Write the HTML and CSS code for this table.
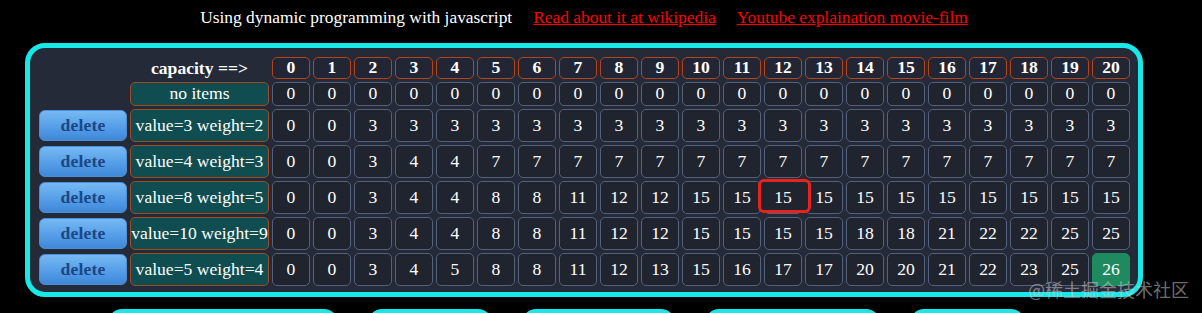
FILE: index.html
```html
<!DOCTYPE html>
<html lang="en">
<head>
<meta charset="utf-8">
<title>Knapsack - dynamic programming</title>
<link rel="stylesheet" href="styles.css">
</head>
<body>
<div class="page">
  <header class="top">
    <span>Using dynamic programming with javascript</span>
    <a href="#">Read about it at wikipedia</a>
    <a href="#">Youtube explaination movie-film</a>
  </header>

  <section class="card">
    <div class="grid">
      <div class="blank"></div>
      <div class="cap">capacity ==&gt;</div>
      <div class="n h">0</div><div class="n h">1</div><div class="n h">2</div><div class="n h">3</div><div class="n h">4</div><div class="n h">5</div><div class="n h">6</div><div class="n h">7</div><div class="n h">8</div><div class="n h">9</div><div class="n h">10</div><div class="n h">11</div><div class="n h">12</div><div class="n h">13</div><div class="n h">14</div><div class="n h">15</div><div class="n h">16</div><div class="n h">17</div><div class="n h">18</div><div class="n h">19</div><div class="n h">20</div>

      <div class="blank"></div>
      <div class="label">no items</div>
      <div class="n">0</div><div class="n">0</div><div class="n">0</div><div class="n">0</div><div class="n">0</div><div class="n">0</div><div class="n">0</div><div class="n">0</div><div class="n">0</div><div class="n">0</div><div class="n">0</div><div class="n">0</div><div class="n">0</div><div class="n">0</div><div class="n">0</div><div class="n">0</div><div class="n">0</div><div class="n">0</div><div class="n">0</div><div class="n">0</div><div class="n">0</div>

      <button class="del">delete</button>
      <div class="label">value=3 weight=2</div>
      <div class="n">0</div><div class="n">0</div><div class="n">3</div><div class="n">3</div><div class="n">3</div><div class="n">3</div><div class="n">3</div><div class="n">3</div><div class="n">3</div><div class="n">3</div><div class="n">3</div><div class="n">3</div><div class="n">3</div><div class="n">3</div><div class="n">3</div><div class="n">3</div><div class="n">3</div><div class="n">3</div><div class="n">3</div><div class="n">3</div><div class="n">3</div>

      <button class="del">delete</button>
      <div class="label">value=4 weight=3</div>
      <div class="n">0</div><div class="n">0</div><div class="n">3</div><div class="n">4</div><div class="n">4</div><div class="n">7</div><div class="n">7</div><div class="n">7</div><div class="n">7</div><div class="n">7</div><div class="n">7</div><div class="n">7</div><div class="n">7</div><div class="n">7</div><div class="n">7</div><div class="n">7</div><div class="n">7</div><div class="n">7</div><div class="n">7</div><div class="n">7</div><div class="n">7</div>

      <button class="del">delete</button>
      <div class="label">value=8 weight=5</div>
      <div class="n">0</div><div class="n">0</div><div class="n">3</div><div class="n">4</div><div class="n">4</div><div class="n">8</div><div class="n">8</div><div class="n">11</div><div class="n">12</div><div class="n">12</div><div class="n">15</div><div class="n">15</div><div class="n mark"><span>15</span></div><div class="n">15</div><div class="n">15</div><div class="n">15</div><div class="n">15</div><div class="n">15</div><div class="n">15</div><div class="n">15</div><div class="n">15</div>

      <button class="del">delete</button>
      <div class="label">value=10 weight=9</div>
      <div class="n">0</div><div class="n">0</div><div class="n">3</div><div class="n">4</div><div class="n">4</div><div class="n">8</div><div class="n">8</div><div class="n">11</div><div class="n">12</div><div class="n">12</div><div class="n">15</div><div class="n">15</div><div class="n">15</div><div class="n">15</div><div class="n">18</div><div class="n">18</div><div class="n">21</div><div class="n">22</div><div class="n">22</div><div class="n">25</div><div class="n">25</div>

      <button class="del">delete</button>
      <div class="label">value=5 weight=4</div>
      <div class="n">0</div><div class="n">0</div><div class="n">3</div><div class="n">4</div><div class="n">5</div><div class="n">8</div><div class="n">8</div><div class="n">11</div><div class="n">12</div><div class="n">13</div><div class="n">15</div><div class="n">16</div><div class="n">17</div><div class="n">17</div><div class="n">20</div><div class="n">20</div><div class="n">21</div><div class="n">22</div><div class="n">23</div><div class="n">25</div><div class="n best">26</div>
    </div>
  </section>

  <nav class="actions">
    <button class="act w1"></button>
    <button class="act w2"></button>
    <button class="act w3"></button>
    <button class="act w4"></button>
    <button class="act w5"></button>
  </nav>
</div>
<div class="watermark">@稀土掘金技术社区</div>
</body>
</html>
```

FILE: styles.css
```css
html, body {
  margin: 0;
  padding: 0;
}

body {
  background: #000;
  color: #fff;
  font-family: "Liberation Serif", "Times New Roman", serif;
  font-size: 17.6px;
  overflow: hidden;
  height: 313px;
  position: relative;
}

.page {
  width: 1118px;
  margin-left: 25px;
}

.top {
  display: flex;
  justify-content: center;
  gap: 21px;
  padding-top: 7px;
  height: 20px;
  line-height: 20px;
  font-size: 17.4px;
  white-space: nowrap;
}

.top a {
  color: #ff0000;
  text-decoration: underline;
}

.card {
  margin-top: 16px;
  border: 5px solid #19e8e8;
  border-radius: 20px;
  background: #252a39;
  padding: 9px 8px 6px 9px;
}

.grid {
  display: grid;
  grid-template-columns: 88px 139px repeat(21, 38px);
  grid-template-rows: 22px 24px repeat(5, 33px);
  gap: 3px;
}

.n {
  display: flex;
  align-items: center;
  justify-content: center;
  border: 1px solid #55617a;
  border-radius: 5px;
  background: #20242f;
  line-height: 1;
}

.n.h {
  border-color: #b3441c;
  font-weight: bold;
  background: #222634;
}

.n.best {
  background: #1f8a5f;
  border-color: #1f8a5f;
}

.n.mark {
  position: relative;
}

.n.mark::before {
  content: "";
  position: absolute;
  left: -7px;
  right: -10px;
  top: -3px;
  bottom: 0;
  border: 3px solid #e8231c;
  border-radius: 6px;
  background: #20242f;
  z-index: 1;
}

.n.mark span {
  position: relative;
  z-index: 2;
}

.label {
  display: flex;
  align-items: center;
  justify-content: center;
  background: #0f4d50;
  border: 1px solid #a24a22;
  border-radius: 5px;
  white-space: nowrap;
  line-height: 1;
}

.cap {
  display: flex;
  align-items: center;
  justify-content: center;
  font-weight: bold;
  white-space: nowrap;
}

.del {
  margin: 1px 0 1px;
  padding: 0;
  border: 1px solid #4d8fd6;
  border-radius: 6px;
  background: linear-gradient(to bottom, #76baf3 0%, #58a0e9 50%, #3f88d9 100%);
  color: #1b4683;
  font-family: "Liberation Serif", "Times New Roman", serif;
  font-size: 17.6px;
  font-weight: bold;
  letter-spacing: 0.2px;
}

.actions {
  display: flex;
  gap: 30px;
  margin-top: 12px;
  padding-left: 83px;
}

.act {
  height: 30px;
  border: 0;
  padding: 0;
  border-radius: 14px;
  background: #19e8e8;
}

.w1 { width: 230px; }
.w2 { width: 124px; }
.w3 { width: 153px; }
.w4 { width: 175px; }
.w5 { width: 115px; }

.watermark {
  position: absolute;
  left: 1028px;
  top: 280px;
  font-family: "Noto Sans CJK SC", "Noto Sans", sans-serif;
  font-size: 18px;
  line-height: 18px;
  color: rgba(205, 205, 205, 0.55);
  white-space: nowrap;
  z-index: 5;
}
```
